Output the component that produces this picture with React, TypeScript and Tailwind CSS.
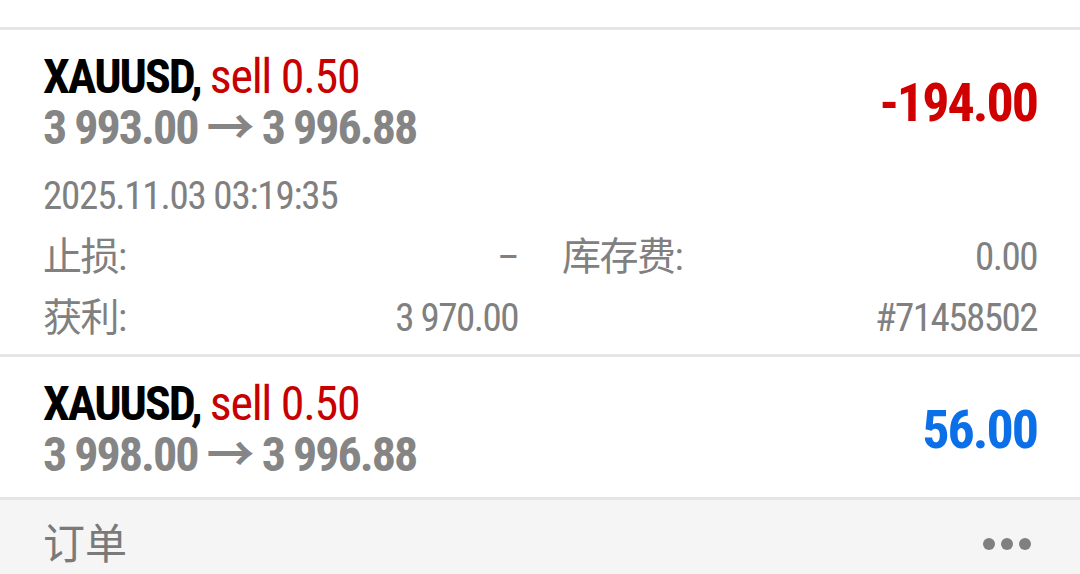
const font = { fontFamily: '"Roboto Condensed", "Noto Sans CJK SC", sans-serif' };

type Detail = { label?: string; value: string };

const Divider = () => <div className="h-[3px] bg-[#e6e6e6]" />;

const OrderHead = ({ price, profit, positive }: { price: string; profit: string; positive?: boolean }) => (
  <div className="flex items-center justify-between">
    <div className="text-[48px] leading-[51px] tracking-[-2px]">
      <div>
        <span className="font-bold text-black">XAUUSD,</span>{' '}
        <span className="tracking-[-1.3px] text-[#c80000]">sell 0.50</span>
      </div>
      <div className="font-bold text-[#858585]">{price}</div>
    </div>
    <div className={`text-[54px] font-bold tracking-[-2px] ${positive ? 'text-[#0b6fe8]' : 'text-[#d00000]'}`}>
      {profit}
    </div>
  </div>
);

const DetailCell = ({ label, value }: Detail) => (
  <div className="flex justify-between">
    <span>{label}</span>
    <span>{value}</span>
  </div>
);

export default function App() {
  const details: Detail[] = [
    { label: '止损:', value: '–' },
    { label: '库存费:', value: '0.00' },
    { label: '获利:', value: '3 970.00' },
    { value: '#71458502' },
  ];

  return (
    <div className="w-[1080px] h-[574px] overflow-hidden bg-white" style={font}>
      {/* previous order, scrolled off the top */}
      <div className="h-[27px] overflow-hidden px-[43px]">
        <div className="mt-[-42px] text-[48px] leading-[51px] tracking-[-2px] font-bold text-[#858585]">
          3 997.00 → 3 996.88
        </div>
      </div>
      <Divider />

      <div className="px-[43px] pt-[21px] pb-[5px]">
        <OrderHead price="3 993.00 → 3 996.88" profit="-194.00" />
        <div className="mt-[13px] text-[39px] leading-[61px] tracking-[-1.5px] text-[#808080]">
          <div className="tracking-[-1.2px]">2025.11.03 03:19:35</div>
          <div className="grid grid-cols-2 gap-x-[44px]">
            {details.map((d, i) => (
              <DetailCell key={i} {...d} />
            ))}
          </div>
        </div>
      </div>
      <Divider />

      <div className="px-[43px] pt-[21px] pb-[17px]">
        <OrderHead price="3 998.00 → 3 996.88" profit="56.00" positive />
      </div>
      <Divider />

      <div className="h-[74px] bg-[#f5f5f5] pl-[43px] pr-[49px] pt-[14px] flex items-center justify-between">
        <span className="text-[42px] text-[#7a7a7a]">订单</span>
        <div className="flex gap-[6px]">
          <span className="w-[12px] h-[12px] rounded-full bg-[#808080]" />
          <span className="w-[12px] h-[12px] rounded-full bg-[#808080]" />
          <span className="w-[12px] h-[12px] rounded-full bg-[#808080]" />
        </div>
      </div>
    </div>
  );
}
